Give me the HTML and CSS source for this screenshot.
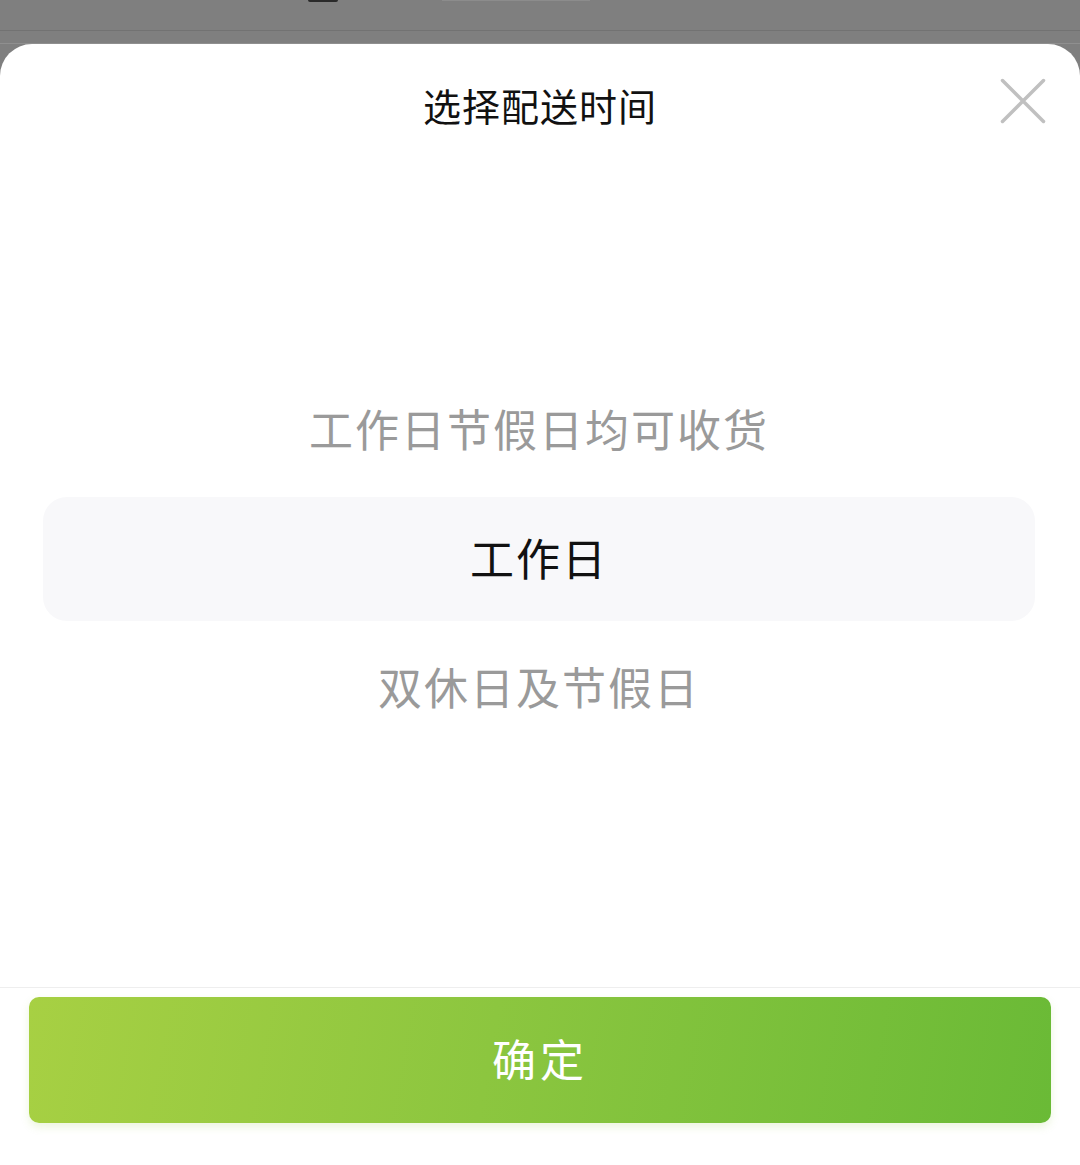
FILE: index.html
```html
<!DOCTYPE html>
<html>
<head>
<meta charset="utf-8">
<title>选择配送时间</title>
<link rel="stylesheet" href="styles.css">
</head>
<body>
<div class="backdrop">
	<div class="backdrop-top">
		<span class="backdrop-mark"></span>
		<span class="backdrop-bar"></span>
	</div>
	<div class="backdrop-rule"></div>
</div>
<div class="sheet">
	<div class="sheet-header">
		<div class="sheet-title">选择配送时间</div>
		<div class="sheet-close">
			<svg width="46" height="46" viewBox="0 0 46 46">
				<path d="M2.5 2.5 L43.5 43.5 M43.5 2.5 L2.5 43.5" stroke="#c0c0c0" stroke-width="3.5" stroke-linecap="round" fill="none"/>
			</svg>
		</div>
	</div>
	<div class="picker">
		<div class="picker-item">工作日节假日均可收货</div>
		<div class="picker-item selected">工作日</div>
		<div class="picker-item">双休日及节假日</div>
	</div>
	<div class="sheet-footer">
		<div class="confirm">确定</div>
	</div>
</div>
</body>
</html>
```

FILE: styles.css
```css
html, body {
	margin: 0;
	padding: 0;
}
body {
	background-color: #7f7f7f;
	font-family: "Noto Sans CJK SC", "Noto Sans", sans-serif;
	width: 1080px;
	height: 1165px;
	overflow: hidden;
}
.backdrop {
	height: 44px;
}
.backdrop-top {
	height: 30px;
	display: flex;
	align-items: flex-start;
	border-bottom: 1px solid #727272;
}
.backdrop-mark {
	margin-left: 308px;
	width: 30px;
	height: 2px;
	border-radius: 0 0 6px 6px;
	background-color: #2a2a2a;
}
.backdrop-bar {
	margin-left: 104px;
	width: 148px;
	height: 1px;
	background-color: #8c8c8c;
}
.backdrop-rule {
	height: 12px;
	border-bottom: 1px solid #8f8f8f;
}
.sheet {
	position: relative;
	height: 1121px;
	background-color: #fff;
	border-radius: 32px 32px 0 0;
	display: flex;
	flex-direction: column;
}
.sheet-header {
	height: 124px;
	display: flex;
	justify-content: center;
	align-items: center;
}
.sheet-title {
	font-size: 38px;
	letter-spacing: 1px;
	color: #111;
	line-height: 1;
	margin-top: -3px;
}
.sheet-close {
	position: absolute;
	top: 34px;
	right: 34px;
	width: 46px;
	height: 46px;
}
.sheet-close svg {
	display: block;
}
.picker {
	height: 819px;
	box-sizing: border-box;
	padding: 200px 45px 0 43px;
	display: flex;
	flex-direction: column;
	gap: 5px;
}
.picker-item {
	height: 124px;
	box-sizing: border-box;
	padding-bottom: 5px;
	display: flex;
	justify-content: center;
	align-items: center;
	font-size: 44px;
	letter-spacing: 2px;
	color: #9a9a9a;
	border-radius: 24px;
}
.picker-item.selected {
	background-color: #f8f8fa;
	color: #111;
}
.sheet-footer {
	border-top: 1px solid #eeeeee;
	padding: 9px 29px 0 29px;
	flex: 1;
}
.confirm {
	height: 126px;
	box-sizing: border-box;
	padding-bottom: 5px;
	border-radius: 10px;
	background: linear-gradient(100deg, #a7d043 0%, #8cc63f 45%, #6aba36 100%);
	box-shadow: 0 4px 8px rgba(150, 200, 70, 0.18);
	color: #fff;
	font-size: 44px;
	letter-spacing: 4px;
	display: flex;
	justify-content: center;
	align-items: center;
}
```
